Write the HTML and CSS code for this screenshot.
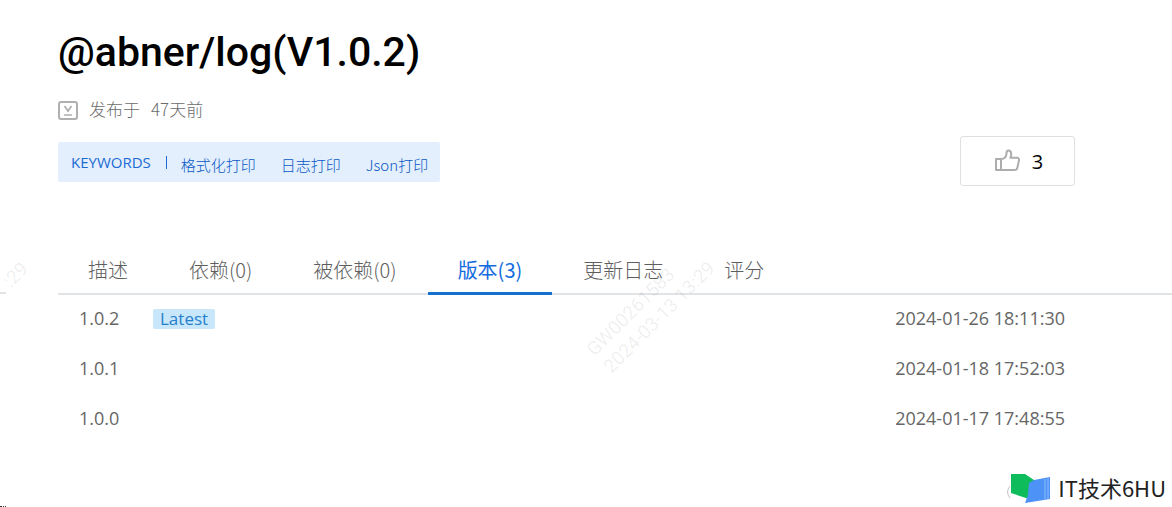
FILE: index.html
```html
<!DOCTYPE html>
<html lang="zh-CN">
<head>
<meta charset="utf-8">
<meta name="viewport" content="width=device-width, initial-scale=1">
<title>@abner/log</title>
<link rel="stylesheet" href="styles.css">
</head>
<body>
<main class="page">
  <header class="package">
    <h1 class="title">@abner/log(V1.0.2)</h1>
    <p class="published">
      <svg class="published-icon" viewBox="0 0 20 20" fill="none" stroke="#b0b0b0" aria-hidden="true">
        <rect x="1" y="1" width="18" height="17" rx="2" stroke-width="2"/>
        <path d="M6.500 5 10 10l3.500-5M10 9.500v1.500M6 14h8" stroke-width="1.700"/>
      </svg>
      <span>发布于</span>
      <span>47天前</span>
    </p>
    <div class="actions">
      <div class="keywords">
        <span class="keywords-label">KEYWORDS</span>
        <a class="keyword" href="#">格式化打印</a>
        <a class="keyword" href="#">日志打印</a>
        <a class="keyword" href="#">Json打印</a>
      </div>
      <button class="like" type="button" aria-label="点赞 3">
        <svg class="like-icon" viewBox="0 0 26 24" fill="none" stroke="#adadad" stroke-width="2" stroke-linejoin="round" aria-hidden="true">
          <path d="M2 10h5v11H2zM7 10c4 0 5.500-3 5.500-6 0-1.500.7-2.500 2-2.500 2 0 2.700 1.500 2.700 3.500 0 1.500-.4 2.800-.8 3.800H23c1.500 0 2.200 1 2 2.500l-1.700 7.700c-.3 1.300-1 2-2.300 2H7"/>
        </svg>
        <span>3</span>
      </button>
    </div>
  </header>

  <nav class="tabs">
    <a class="tab" href="#">描述</a>
    <a class="tab" href="#">依赖(0)</a>
    <a class="tab" href="#">被依赖(0)</a>
    <a class="tab tab-active" href="#" aria-current="page">版本(3)</a>
    <a class="tab" href="#">更新日志</a>
    <a class="tab" href="#">评分</a>
  </nav>

  <table class="versions">
    <tbody>
      <tr><td class="version">1.0.2</td><td><span class="latest">Latest</span></td><td class="date">2024-01-26 18:11:30</td></tr>
      <tr><td class="version">1.0.1</td><td></td><td class="date">2024-01-18 17:52:03</td></tr>
      <tr><td class="version">1.0.0</td><td></td><td class="date">2024-01-17 17:48:55</td></tr>
    </tbody>
  </table>

  <footer class="brand">
    <svg class="brand-logo" viewBox="0 0 46 32" aria-hidden="true">
      <path d="M4 13q-5 6 0 12" fill="none" stroke="#c4c4c4"/>
      <path d="M5 1h14l9 6 2 4-7 15-18-6z" fill="#0ebc5c"/>
      <path d="M23 10 28 7l16-3v22l-25 4 3-8z" fill="#4d92f7"/>
      <path d="M39 6v21M42 5v21" stroke="#8fbcfb" stroke-width="1"/>
    </svg>
    <span class="brand-name">IT技术6HU</span>
  </footer>
</main>
<div class="edge-line"></div>
<div class="corner-mark"></div>
<div class="watermark watermark-center" aria-hidden="true">GW00261583<br>2024-03-13 13:29</div>
<div class="watermark watermark-left" aria-hidden="true">:29</div>
</body>
</html>
```
FILE: styles.css
```css
* {
  box-sizing: border-box;
}

body {
  position: relative;
  min-height: 100vh;
  margin: 0;
  overflow-x: hidden;
  background: #fff;
  color: #666;
  font-family: "Open Sans", "Noto Sans CJK SC", sans-serif;
  font-size: 18px;
}

a {
  color: inherit;
  text-decoration: none;
}

.page {
  display: flex;
  flex-direction: column;
  min-height: 100vh;
  padding: 24px 0 0 58px;
}

.title {
  margin: 0;
  color: #000;
  font-family: Roboto, sans-serif;
  font-size: 41px;
  font-weight: 500;
  line-height: 56px;
}

.published {
  display: flex;
  align-items: center;
  gap: 11px;
  margin: 16px 0 0;
  color: #6c6c6c;
  font-family: "Noto Sans CJK SC", sans-serif;
  font-size: 17px;
  font-weight: 300;
  line-height: 26px;
}

.published-icon {
  width: 20px;
  height: 20px;
  margin-top: 4px;
}

.actions {
  display: flex;
  align-items: flex-start;
  justify-content: space-between;
  margin: 14px 97px 0 0;
}

.keywords {
  display: flex;
  align-items: center;
  height: 40px;
  margin-top: 6px;
  padding: 0 12px 0 13px;
  border-radius: 2px;
  background: #e3effd;
  color: #1b6bd3;
  font-size: 15px;
  line-height: 20px;
}

.keywords-label {
  margin-right: 14px;
  padding-right: 16px;
  background: linear-gradient(#1b6bd3, #1b6bd3) right center / 1px 13px no-repeat;
}

.keyword {
  padding-top: 6px;
  color: #0a58c4;
  font-family: "Noto Sans CJK SC", sans-serif;
  font-weight: 300;
}

.keyword + .keyword {
  margin-left: 25px;
}

.like {
  display: flex;
  align-items: center;
  justify-content: center;
  gap: 12px;
  width: 115px;
  height: 50px;
  padding: 0 0 0 2px;
  border: 1px solid #dfdfdf;
  border-radius: 3px;
  background: #fff;
  color: #000;
  font: inherit;
  font-size: 20px;
}

.like-icon {
  width: 26px;
  height: 24px;
}

.tabs {
  display: flex;
  gap: 1px;
  margin-top: 62px;
  border-bottom: 2px solid #e1e4e6;
  color: #5e5e5e;
  font-family: "Noto Sans CJK SC", sans-serif;
  font-size: 20px;
  font-weight: 300;
  line-height: 44px;
}

.tab {
  height: 47px;
  margin-bottom: -2px;
  padding: 0 30px;
}

.tab-active {
  border-bottom: 3px solid #1470cc;
  color: #146be0;
  font-weight: 400;
}

.versions {
  width: calc(100% - 107px);
  margin-top: -2px;
  border-collapse: collapse;
}

.versions td {
  height: 50px;
  padding: 0;
}

.versions .version {
  width: 95px;
  padding-left: 21px;
}

.versions .date {
  text-align: right;
}

.latest {
  display: inline-block;
  padding: 0 7px;
  border-radius: 2px;
  background: #c9e7fb;
  color: #2580cc;
  font-size: 17px;
  line-height: 20px;
}

.brand {
  display: flex;
  align-items: center;
  align-self: flex-end;
  gap: 6px;
  margin-top: auto;
  padding: 0 6px 2px 0;
  color: #222;
  font-family: "Noto Sans CJK SC", sans-serif;
  font-size: 22px;
  line-height: 28px;
}

.brand-logo {
  width: 46px;
  height: 32px;
}

.brand-name {
  padding-bottom: 4px;
}

.edge-line {
  position: absolute;
  top: 292px;
  left: 0;
  width: 6px;
  height: 2px;
  background: #e1e4e6;
}

.corner-mark {
  position: absolute;
  bottom: 0;
  left: 0;
  width: 6px;
  border-bottom: 1px dotted #333;
}

.watermark {
  position: absolute;
  color: rgba(0, 0, 0, 0.07);
  font-family: Roboto, sans-serif;
  font-size: 19px;
  line-height: 24px;
  white-space: nowrap;
  transform: rotate(-45deg);
  pointer-events: none;
}

.watermark-center {
  top: 285px;
  left: 577px;
}

.watermark-left {
  top: 263px;
  left: 3px;
}
```
